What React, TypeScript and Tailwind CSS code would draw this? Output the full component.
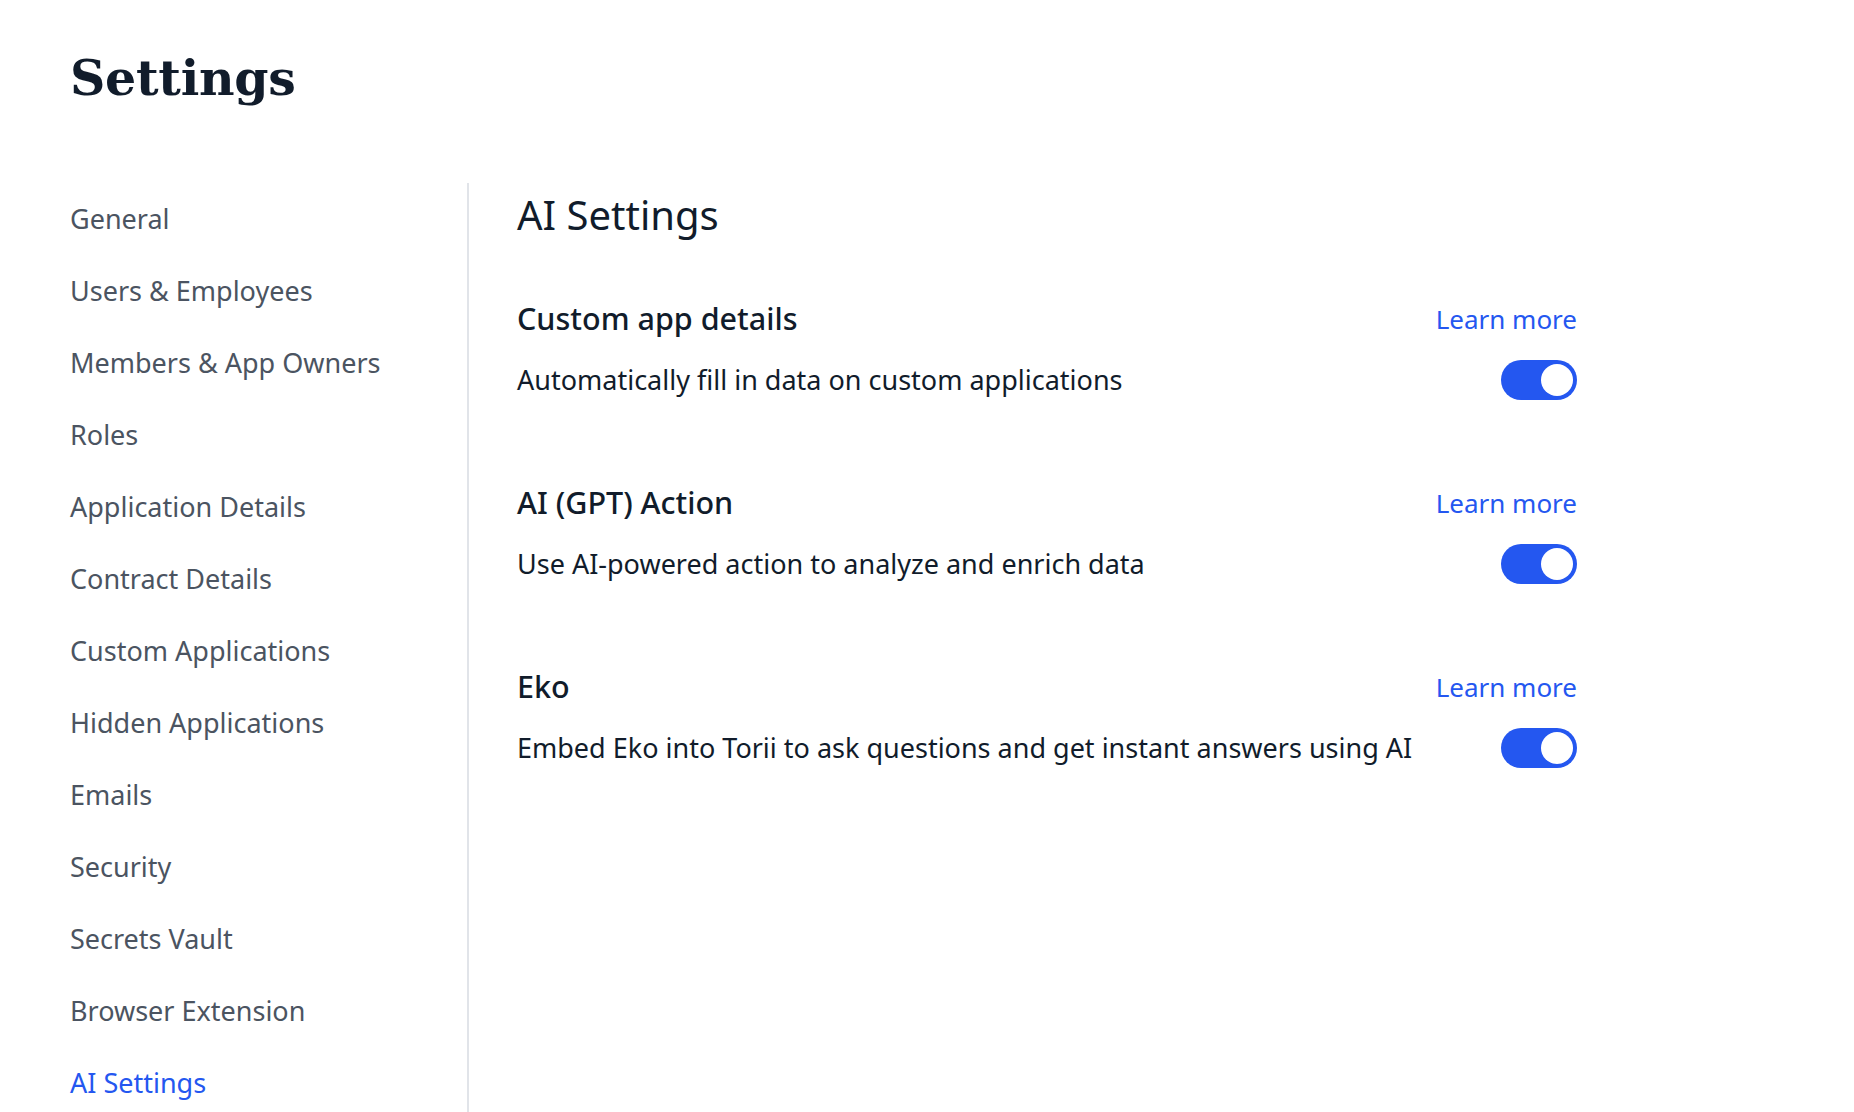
import React from "react";

const navItems = [
  "General",
  "Users & Employees",
  "Members & App Owners",
  "Roles",
  "Application Details",
  "Contract Details",
  "Custom Applications",
  "Hidden Applications",
  "Emails",
  "Security",
  "Secrets Vault",
  "Browser Extension",
  "AI Settings",
];

const sections = [
  { title: "Custom app details", desc: "Automatically fill in data on custom applications" },
  { title: "AI (GPT) Action", desc: "Use AI-powered action to analyze and enrich data" },
  { title: "Eko", desc: "Embed Eko into Torii to ask questions and get instant answers using AI" },
];

function Toggle() {
  return (
    <div className="w-[76px] h-[40px] rounded-full bg-[#2457f0] flex items-center justify-end px-[4px]">
      <div className="w-[32px] h-[32px] rounded-full bg-white" />
    </div>
  );
}

export default function App() {
  return (
    <div
      className="w-full h-[1112px] overflow-hidden bg-white pl-[70px]"
      style={{ fontFamily: "'Noto Sans', Lato, sans-serif" }}
    >
      <div className="h-[183px] pt-[48px]">
        <h1
          className="text-[49px] leading-[60px] font-bold text-[#111c2b] tracking-[-0.3px]"
          style={{ fontFamily: "'DejaVu Serif', 'Liberation Serif', serif" }}
        >
          Settings
        </h1>
      </div>
      <div className="flex h-[929px]">
        <nav className="w-[399px] border-r-2 border-[#e1e4e9] flex flex-col">
          {navItems.map((item) => (
            <div
              key={item}
              className={
                "h-[72px] shrink-0 flex items-center text-[27px] " +
                (item === "AI Settings" ? "text-[#2457f0]" : "text-[#4b5461]")
              }
            >
              {item}
            </div>
          ))}
        </nav>
        <main className="pl-[48px] w-[1108px] flex flex-col">
          <div className="h-[64px] flex items-center text-[40px] text-[#111c2b]">AI Settings</div>
          <div className="h-[52px]" />
          {sections.map((s) => (
            <div key={s.title} className="h-[184px] shrink-0 flex flex-col">
              <div className="h-[40px] flex items-center justify-between">
                <span className="text-[30.5px] font-medium text-[#111c2b]">{s.title}</span>
                <span className="text-[26px] text-[#2457f0]">Learn more</span>
              </div>
              <div className="h-[40px] mt-[21px] flex items-center justify-between">
                <span className="text-[27px] text-[#111c2b]">{s.desc}</span>
                <Toggle />
              </div>
            </div>
          ))}
        </main>
      </div>
    </div>
  );
}
